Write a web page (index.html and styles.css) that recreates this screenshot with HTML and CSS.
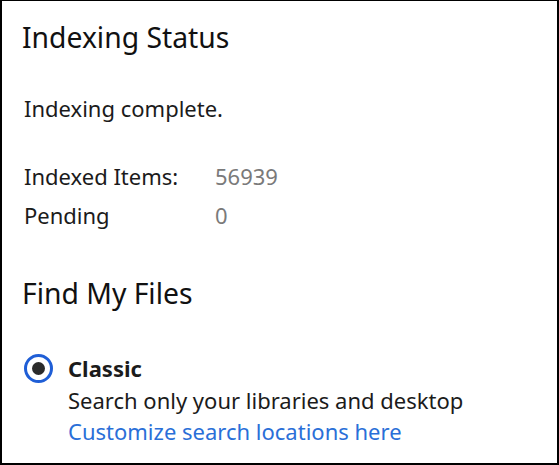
FILE: index.html
```html
<!DOCTYPE html>
<html>
<head>
<meta charset="utf-8">
<link rel="stylesheet" href="styles.css">
</head>
<body>
<div class="panel">
  <h2 class="title">Indexing Status</h2>
  <p class="status">Indexing complete.</p>
  <div class="stats">
    <span class="label">Indexed Items:</span><span class="value">56939</span>
    <span class="label">Pending</span><span class="value">0</span>
  </div>
  <h2 class="title title-find">Find My Files</h2>
  <div class="option">
    <span class="radio"><span class="dot"></span></span>
    <div class="option-body">
      <div class="option-name">Classic</div>
      <div class="option-desc">Search only your libraries and desktop</div>
      <a class="link" href="#">Customize search locations here</a>
    </div>
  </div>
</div>
</body>
</html>
```

FILE: styles.css
```css
html, body {
  margin: 0;
  padding: 0;
  background: #ffffff;
}
body {
  font-family: "Noto Sans", "Open Sans", sans-serif;
  color: #1b1b1b;
}
.panel {
  box-sizing: border-box;
  width: 559px;
  height: 465px;
  border-top: 1px solid #000;
  border-left: 2px solid #000;
  border-right: 2px solid #000;
  border-bottom: 2px solid #000;
  padding: 0 0 0 20px;
  overflow: hidden;
}
.title {
  margin: 0;
  font-weight: 400;
  font-size: 28.3px;
  line-height: 34px;
  padding-top: 19px;
  color: #111;
}
.status {
  margin: 0;
  padding-top: 40px;
  font-size: 22px;
  line-height: 28px;
  padding-left: 2px;
}
.stats {
  display: grid;
  grid-template-columns: 191px auto;
  row-gap: 11px;
  padding-top: 40px;
  padding-left: 2px;
  font-size: 22px;
  line-height: 28px;
}
.value {
  color: #7a7a7a;
}
.title-find {
  padding-top: 47px;
}
.option {
  display: flex;
  gap: 15px;
  padding-top: 43px;
  padding-left: 2px;
}
.radio {
  box-sizing: border-box;
  width: 29px;
  height: 29px;
  margin-top: 1px;
  border: 3px solid #1f5ed6;
  border-radius: 50%;
  display: flex;
  align-items: center;
  justify-content: center;
  flex: none;
}
.dot {
  width: 13px;
  height: 13px;
  border-radius: 50%;
  background: #2b2b2b;
}
.option-body {
  display: flex;
  flex-direction: column;
  font-size: 22px;
}
.option-name {
  font-weight: 700;
  line-height: 31px;
}
.option-desc {
  line-height: 32px;
}
.link {
  color: #2a6fd8;
  text-decoration: none;
  line-height: 30px;
}
```
